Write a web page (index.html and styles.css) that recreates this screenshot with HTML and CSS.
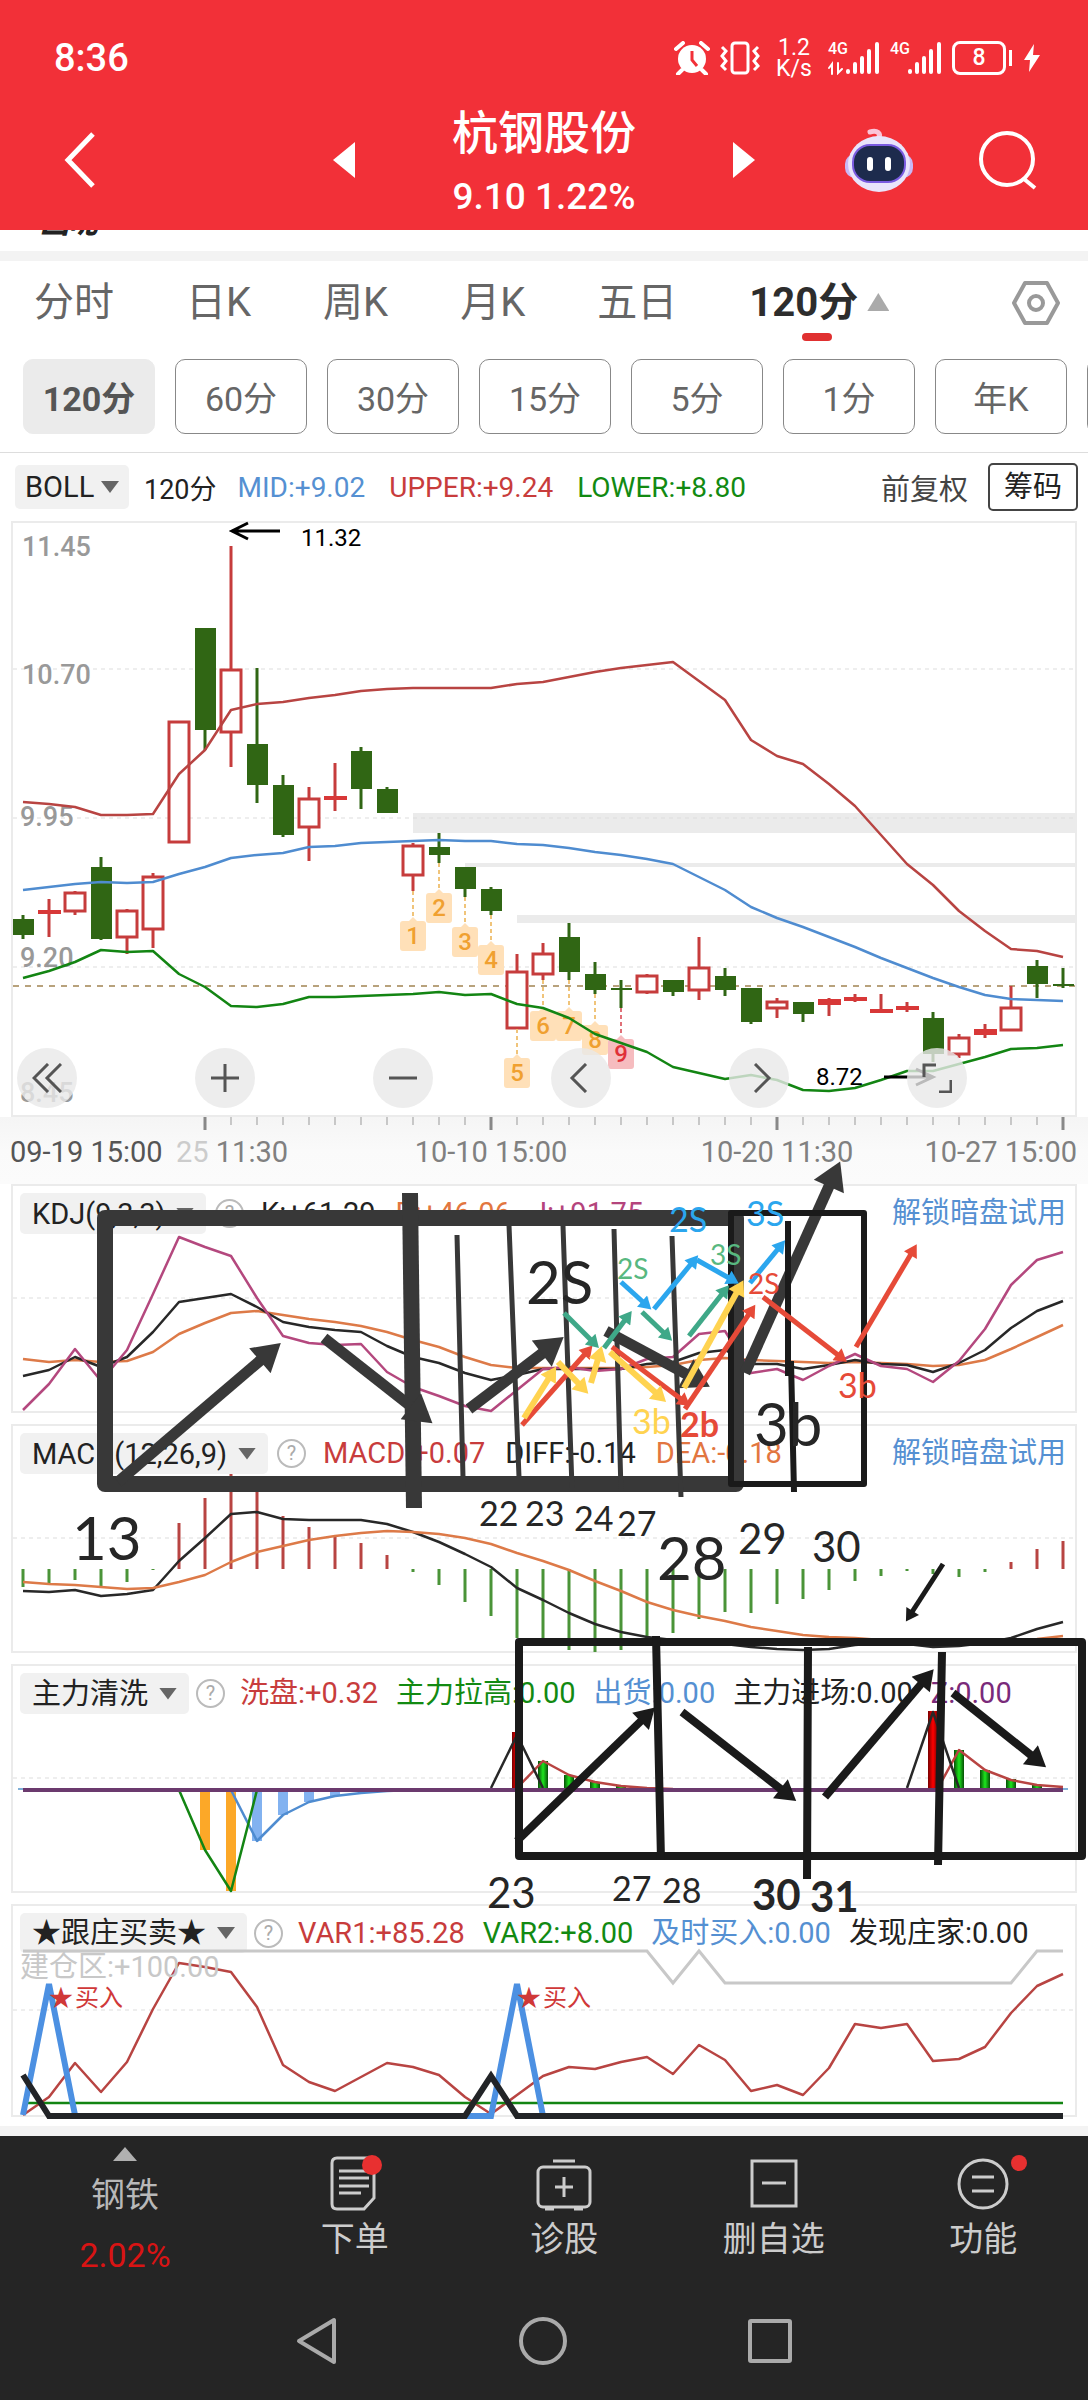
FILE: index.html
```
<!DOCTYPE html>
<html lang="zh-CN">
<head>
    <meta charset="UTF-8">
    <meta name="viewport" content="width=device-width, initial-scale=1.0">
    <title>杭钢股份</title>
    <link rel="stylesheet" href="styles.css">
</head>
<body>
    <header class="top">
        <div class="status">
            <span class="clock">8:36</span>
            <div class="status-icons">
                <svg width="36" height="34" viewBox="0 0 36 34">
                    <circle cx="18" cy="18" r="14" fill="#fff"/>
                    <path d="M18 10v9l5 6" fill="none" stroke="#f23038" stroke-width="3"/>
                    <path d="M2 8l7-6M34 8l-7-6M8 29l-4 4M28 29l4 4" stroke="#fff" stroke-width="4" stroke-linecap="round"/>
                </svg>
                <svg width="40" height="34" viewBox="0 0 40 34" fill="none" stroke="#fff" stroke-width="3">
                    <rect x="12" y="2" width="16" height="30" rx="3"/>
                    <path d="M2 6l4 4-4 5 4 5-4 5 4 4M38 6l-4 4 4 5-4 5 4 5-4 4"/>
                </svg>
                <span class="speed">1.2<br>K/s</span>
                <span class="signal">
                    <span class="net">4G</span>
                    <svg width="52" height="34" viewBox="0 0 52 34" fill="none" stroke="#fff" stroke-width="4" stroke-linecap="round">
                        <path d="M20 30v1M27 23v8M34 17v14M41 10v21M49 3v28"/>
                        <path d="M4 33V23l-3 4M10 22v10l4-4" stroke-width="2"/>
                    </svg>
                </span>
                <span class="signal">
                    <span class="net">4G</span>
                    <svg width="52" height="34" viewBox="0 0 52 34" fill="none" stroke="#fff" stroke-width="4" stroke-linecap="round">
                        <path d="M20 30v1M27 23v8M34 17v14M41 10v21M49 3v28"/>
                    </svg>
                </span>
                <span class="battery">8</span>
                <svg width="16" height="28" viewBox="0 0 16 28"><path d="M10 0L0 16h6l-1 12L16 11H9z" fill="#fff"/></svg>
            </div>
        </div>
        <div class="titlebar">
            <button class="icon-btn back" aria-label="返回">
                <svg width="32" height="56" viewBox="0 0 32 56"><path d="M29 2L4 28l25 26" fill="none" stroke="#fff" stroke-width="5"/></svg>
            </button>
            <div class="stock">
                <button class="icon-btn" aria-label="上一只"><svg width="22" height="36" viewBox="0 0 22 36"><path d="M22 0v36L0 18z" fill="#fff"/></svg></button>
                <div class="stock-name">
                    <h1>杭钢股份</h1>
                    <p>9.10 1.22%</p>
                </div>
                <button class="icon-btn" aria-label="下一只"><svg width="22" height="36" viewBox="0 0 22 36"><path d="M0 0v36l22-18z" fill="#fff"/></svg></button>
            </div>
            <div class="tools">
                <button class="icon-btn" aria-label="助手">
                    <svg width="70" height="66" viewBox="0 0 70 66">
                        <path d="M34 12c4-6-1-9-8-7" fill="none" stroke="#fbc4d8" stroke-width="5" stroke-linecap="round"/>
                        <rect x="1" y="27" width="68" height="24" rx="10" fill="#c9b8f5"/>
                        <ellipse cx="35" cy="37" rx="31" ry="28" fill="#e9e4fb"/>
                        <rect x="8" y="17" width="54" height="39" rx="18" fill="#7a5be0"/>
                        <rect x="10" y="19" width="50" height="35" rx="16" fill="#1d2b4d"/>
                        <path d="M26 33v8M44 33v8" stroke="#fff" stroke-width="6" stroke-linecap="round"/>
                    </svg>
                </button>
                <button class="icon-btn" aria-label="搜索">
                    <svg width="60" height="60" viewBox="0 0 60 60" fill="none" stroke="#fff" stroke-width="4"><circle cx="29" cy="29" r="26"/><path d="M46 49l11 9"/></svg>
                </button>
            </div>
        </div>
    </header>

    <div class="peek"><span>画呢</span></div>

    <nav class="tabs">
        <button>分时</button>
        <button>日K</button>
        <button>周K</button>
        <button>月K</button>
        <button>五日</button>
        <button class="active">120分</button>
        <button class="setting" aria-label="设置">
            <svg width="48" height="46" viewBox="0 0 48 46" fill="none" stroke="#999" stroke-width="4" stroke-linejoin="round"><path d="M13 3h22l11 20-11 20H13L2 23z"/><circle cx="24" cy="23" r="7"/></svg>
        </button>
    </nav>

    <div class="periods">
        <button class="active">120分</button>
        <button>60分</button>
        <button>30分</button>
        <button>15分</button>
        <button>5分</button>
        <button>1分</button>
        <button>年K</button>
        <button aria-label="季K"></button>
    </div>

    <div class="boll">
        <label class="chip"><select aria-label="主图指标"><option>BOLL</option></select></label>
        <span class="black cycle">120分</span>
        <span class="blue">MID:+9.02</span>
        <span class="red">UPPER:+9.24</span>
        <span class="green">LOWER:+8.80</span>
        <button class="adjust">前复权</button>
        <button class="chips-btn">筹码</button>
    </div>

    <!-- K线主图 -->
    <section class="kline">
        <svg class="plot" viewBox="13 523 1062 592">
            <g class="band">
                <rect x="413" y="813" width="662" height="20"/>
                <rect x="465" y="863" width="610" height="4"/>
                <rect x="517" y="915" width="558" height="8"/>
            </g>
            <path class="grid" d="M13 669H1075M13 818H1075M13 967H1075"/>
            <path class="price" d="M13 986H1075"/>
            <g class="axis">
                <text x="22" y="556">11.45</text>
                <text x="22" y="684">10.70</text>
                <text x="20" y="826">9.95</text>
                <text x="20" y="967">9.20</text>
                <text x="20" y="1102">8.45</text>
            </g>

            <!-- 阳线 -->
            <path class="up-wick" d="M49 899V937M75 891V893M75 911V915M127 909V911M127 937V954M153 873V877M153 929V948M231 546V670M231 732V767M309 787V799M309 827V861M335 763V811M413 843V846M413 875V891M517 954V972M543 943V954M543 974V980M647 974V976M647 992V994M699 937V968M699 990V1000M777 998V1002M777 1008V1018M829 998V1016M855 994V1002M881 994V1013M907 1002V1012M959 1034V1038M959 1054V1058M985 1024V1038M1011 986V1008"/>
            <g class="up">
                <rect x="65" y="893" width="20" height="18"/>
                <rect x="117" y="911" width="20" height="26"/>
                <rect x="143" y="877" width="20" height="52"/>
                <rect x="169" y="722" width="20" height="120"/>
                <rect x="221" y="670" width="20" height="62"/>
                <rect x="299" y="799" width="20" height="28"/>
                <rect x="403" y="846" width="20" height="29"/>
                <rect x="507" y="972" width="20" height="56"/>
                <rect x="533" y="954" width="20" height="20"/>
                <rect x="637" y="976" width="20" height="16"/>
                <rect x="689" y="968" width="20" height="22"/>
                <rect x="767" y="1002" width="20" height="6"/>
                <rect x="949" y="1038" width="20" height="16"/>
                <rect x="1001" y="1008" width="20" height="22"/>
            </g>
            <path class="up-flat" d="M38 910h23v4H38zM324 796h23v4H324zM818 999h23v6H818zM844 997h23v4H844zM870 1009h23v4H870zM896 1006h23v4H896zM974 1029h23v6H974z"/>

            <!-- 阴线 -->
            <path class="down-wick" d="M23 915V939M101 857V940M205 628V750M257 668V803M283 775V837M361 747V809M387 787V813M439 833V863M465 867V897M491 887V915M569 923V980M595 962V994M621 980V1008M673 980V996M725 968V996M751 988V1024M803 1002V1022M933 1012V1062M1037 960V998M1063 968V988"/>
            <path class="down" d="M13 919h21v16H13zM91 867h21v72H91zM195 628h21v102H195zM247 744h21v41H247zM273 785h21v50H273zM351 751h21v38H351zM377 789h21v24H377zM429 847h21v8H429zM455 867h21v22H455zM481 889h21v22H481zM559 937h21v35H559zM585 974h21v16H585zM611 988h21v2H611zM663 980h21v12H663zM715 976h21v14H715zM741 988h21v34H741zM793 1002h21v12H793zM923 1018h21v36H923zM1027 966h21v18H1027zM1053 984h21v2H1053z"/>

            <!-- 九转序列 -->
            <path class="nine-line" d="M413 891V920M439 863V892M465 897V926M491 915V944M517 1029V1057M543 980V1011M569 980V1011M595 994V1024"/>
            <path class="nine-line last" d="M621 1008V1037"/>
            <g class="nine">
                <path d="M403 921h6l4-4 4 4h6q3 0 3 3v24q0 3-3 3h-20q-3 0-3-3v-24q0-3 3-3z"/>
                <path d="M429 893h6l4-4 4 4h6q3 0 3 3v24q0 3-3 3h-20q-3 0-3-3v-24q0-3 3-3z"/>
                <path d="M455 927h6l4-4 4 4h6q3 0 3 3v24q0 3-3 3h-20q-3 0-3-3v-24q0-3 3-3z"/>
                <path d="M481 945h6l4-4 4 4h6q3 0 3 3v24q0 3-3 3h-20q-3 0-3-3v-24q0-3 3-3z"/>
                <path d="M507 1058h6l4-4 4 4h6q3 0 3 3v24q0 3-3 3h-20q-3 0-3-3v-24q0-3 3-3z"/>
                <path d="M533 1011h6l4-4 4 4h6q3 0 3 3v24q0 3-3 3h-20q-3 0-3-3v-24q0-3 3-3z"/>
                <path d="M559 1011h6l4-4 4 4h6q3 0 3 3v24q0 3-3 3h-20q-3 0-3-3v-24q0-3 3-3z"/>
                <path d="M585 1025h6l4-4 4 4h6q3 0 3 3v24q0 3-3 3h-20q-3 0-3-3v-24q0-3 3-3z"/>
                <path class="last" d="M611 1039h6l4-4 4 4h6q3 0 3 3v24q0 3-3 3h-20q-3 0-3-3v-24q0-3 3-3z"/>
                <text x="413" y="944">1</text>
                <text x="439" y="916">2</text>
                <text x="465" y="950">3</text>
                <text x="491" y="968">4</text>
                <text x="517" y="1081">5</text>
                <text x="543" y="1034">6</text>
                <text x="569" y="1034">7</text>
                <text x="595" y="1048">8</text>
                <text class="last" x="621" y="1062">9</text>
            </g>

            <polyline class="line c-red" points="23,802 49,804 75,807 101,815 127,815 153,814 179,774 205,750 231,710 257,704 283,702 309,698 335,695 361,691 387,689 413,688 439,688 465,688 491,688 517,684 543,682 569,677 595,672 621,668 647,665 673,662 699,681 725,700 751,740 777,756 803,764 829,784 855,806 881,835 907,864 933,885 959,911 985,931 1011,949 1037,951 1063,957"/>
            <polyline class="line c-blue" points="23,890 49,887 75,884 101,882 127,883 153,882 179,874 205,867 231,858 257,855 283,853 309,847 335,846 361,843 387,842 413,841 439,840 465,841 491,841 517,844 543,845 569,848 595,852 621,855 647,859 673,864 699,877 725,890 751,907 777,918 803,927 829,937 855,947 881,958 907,968 933,978 959,987 985,995 1011,999 1037,1000 1063,1001"/>
            <polyline class="line c-green" points="23,978 49,971 75,962 101,950 127,952 153,951 179,974 205,987 231,1006 257,1007 283,1004 309,997 335,997 361,996 387,995 413,994 439,992 465,995 491,994 517,1004 543,1008 569,1018 595,1034 621,1043 647,1052 673,1067 699,1073 725,1079 751,1075 777,1080 803,1090 829,1091 855,1088 881,1080 907,1071 933,1071 959,1064 985,1057 1011,1049 1037,1048 1063,1045"/>

            <g class="extreme">
                <path d="M280 531H232M248 523L232 531L248 539M884 1077H933M916 1069L933 1077L916 1085"/>
                <text x="301" y="546">11.32</text>
                <text x="816" y="1085">8.72</text>
            </g>
        </svg>
        <div class="zoom-bar">
            <button aria-label="最左"><svg width="30" height="30" viewBox="0 0 30 30"><path d="M16 1L2 15l14 14M29 1L15 15l14 14"/></svg></button>
            <button aria-label="放大"><svg width="30" height="30" viewBox="0 0 30 30"><path d="M1 15h28M15 1v28"/></svg></button>
            <button aria-label="缩小"><svg width="30" height="30" viewBox="0 0 30 30"><path d="M1 15h28"/></svg></button>
            <button aria-label="左移"><svg width="30" height="30" viewBox="0 0 30 30"><path d="M20 1L6 15l14 14"/></svg></button>
            <button aria-label="右移"><svg width="30" height="30" viewBox="0 0 30 30"><path d="M11 1l14 14-14 14"/></svg></button>
            <button aria-label="全屏"><svg width="30" height="30" viewBox="0 0 30 30"><path d="M14 2H2v12M17 29h12V17"/></svg></button>
        </div>
    </section>
    <svg class="time-axis" viewBox="0 1117 1088 67">
        <path class="tick" d="M231 1117v8M257 1117v8M283 1117v8M309 1117v8M335 1117v8M361 1117v8M387 1117v8M413 1117v8M439 1117v8M465 1117v8M517 1117v8M543 1117v8M569 1117v8M595 1117v8M621 1117v8M647 1117v8M673 1117v8M699 1117v8M725 1117v8M751 1117v8M803 1117v8M829 1117v8M855 1117v8M881 1117v8M907 1117v8M933 1117v8M959 1117v8M985 1117v8M1011 1117v8M1037 1117v8"/>
        <path class="tick major" d="M205 1117v13M491 1117v13M777 1117v13M1063 1117v13"/>
        <text class="first" x="10" y="1162">09-19 15:00</text>
        <text x="176" y="1162"><tspan class="faded">25</tspan> 11:30</text>
        <text x="491" y="1162" text-anchor="middle">10-10 15:00</text>
        <text x="777" y="1162" text-anchor="middle">10-20 11:30</text>
        <text x="1077" y="1162" text-anchor="end">10-27 15:00</text>
    </svg>

    <div class="studies">
        <section class="panel">
            <svg class="plot" viewBox="13 1186 1062 225">
                <path class="grid" d="M13 1298H1075"/>
                <polyline class="line c-orange" points="23,1359 49,1362 75,1360 101,1362 127,1361 153,1352 179,1334 205,1323 231,1313 257,1311 283,1315 309,1319 335,1322 361,1326 387,1332 413,1340 439,1347 465,1357 491,1365 517,1368 543,1368 569,1368 595,1368 621,1368 647,1367 673,1365 699,1360 725,1358 751,1360 777,1361 803,1362 829,1363 855,1362 881,1363 907,1364 933,1366 959,1365 985,1360 1011,1349 1037,1337 1063,1325"/>
                <polyline class="line c-black" points="23,1376 49,1370 75,1357 101,1367 127,1357 153,1332 179,1302 205,1298 231,1294 257,1307 283,1322 309,1327 335,1330 361,1332 387,1346 413,1357 439,1363 465,1373 491,1380 517,1375 543,1369 569,1369 595,1369 621,1369 647,1364 673,1362 699,1353 725,1350 751,1364 777,1364 803,1369 829,1365 855,1360 881,1364 907,1365 933,1372 959,1363 985,1350 1011,1328 1037,1311 1063,1301"/>
                <polyline class="line c-pink" points="23,1410 49,1384 75,1349 101,1381 127,1350 153,1294 179,1237 205,1247 231,1256 257,1298 283,1336 309,1343 335,1345 361,1344 387,1372 413,1387 439,1396 465,1406 491,1411 517,1390 543,1369 569,1367 595,1371 621,1369 647,1359 673,1357 699,1334 725,1331 751,1373 777,1369 803,1380 829,1366 855,1354 881,1366 907,1369 933,1382 959,1361 985,1329 1011,1285 1037,1260 1063,1252"/>
            </svg>
            <div class="head">
                <label class="chip"><select aria-label="副图指标一"><option>KDJ(9,3,3)</option></select></label>
                <button class="help" aria-label="KDJ说明">?</button>
                <span class="black">K:+61.29</span>
                <span class="orange">D:+46.06</span>
                <span class="pink">J:+91.75</span>
                <a class="unlock" href="#">解锁暗盘试用</a>
            </div>
        </section>

        <section class="panel">
            <svg class="plot" viewBox="13 1426 1062 225">
                <path class="grid" d="M13 1538H1075"/>
                <path class="bar c-red" d="M179 1569V1523M205 1569V1498M231 1569V1472M257 1569V1480M283 1569V1516M309 1569V1527M335 1569V1537M361 1569V1543M387 1569V1555M1011 1569V1562M1037 1569V1549M1063 1569V1541"/>
                <path class="bar c-leaf" d="M23 1569V1587M49 1569V1585M75 1569V1580M101 1569V1587M127 1569V1582M153 1569V1570M413 1569V1572M439 1569V1585M465 1569V1602M491 1569V1616M517 1569V1638M543 1569V1645M569 1569V1650M595 1569V1652M621 1569V1650M647 1569V1637M673 1569V1633M699 1569V1619M725 1569V1612M751 1569V1613M777 1569V1604M803 1569V1599M829 1569V1590M855 1569V1581M881 1569V1576M907 1569V1571M933 1569V1574M959 1569V1577M985 1569V1572"/>
                <polyline class="line c-black" points="23,1591 49,1592 75,1590 101,1596 127,1594 153,1590 179,1561 205,1538 231,1514 257,1512 283,1519 309,1520 335,1520 361,1520 387,1524 413,1532 439,1542 465,1554 491,1567 517,1588 543,1600 569,1613 595,1624 621,1632 647,1637 673,1640 699,1643 725,1644 751,1647 777,1649 803,1650 829,1649 855,1645 881,1643 907,1644 933,1647 959,1646 985,1643 1011,1638 1037,1629 1063,1622"/>
                <polyline class="line c-orange" points="23,1582 49,1584 75,1585 101,1587 127,1589 153,1588 179,1582 205,1575 231,1562 257,1552 283,1546 309,1540 335,1536 361,1533 387,1531 413,1532 439,1534 465,1538 491,1544 517,1553 543,1561 569,1570 595,1581 621,1591 647,1602 673,1610 699,1616 725,1621 751,1627 777,1631 803,1635 829,1637 855,1638 881,1640 907,1641 933,1642 959,1642 985,1642 1011,1641 1037,1639 1063,1636"/>
            </svg>
            <div class="head">
                <label class="chip"><select aria-label="副图指标二"><option>MACD(12,26,9)</option></select></label>
                <button class="help" aria-label="MACD说明">?</button>
                <span class="red">MACD:+0.07</span>
                <span class="black">DIFF:-0.14</span>
                <span class="orange">DEA:-0.18</span>
                <a class="unlock" href="#">解锁暗盘试用</a>
            </div>
        </section>

        <section class="panel">
            <svg class="plot" viewBox="13 1666 1062 225">
                <defs>
                    <linearGradient id="tubeGreen"><stop offset="0" stop-color="#064d06"/><stop offset=".5" stop-color="#1ee61e"/><stop offset="1" stop-color="#064d06"/></linearGradient>
                    <linearGradient id="tubeRed"><stop offset="0" stop-color="#700"/><stop offset=".5" stop-color="#f00"/><stop offset="1" stop-color="#700"/></linearGradient>
                </defs>
                <path class="grid" d="M13 1778H1075"/>
                <path d="M200 1790h10v60h-10zM226 1790h10v101h-10z" fill="#fca828"/>
                <path d="M252 1790h10v51h-10zM278 1790h10v25h-10zM304 1790h10v12h-10zM330 1790h10v6h-10z" fill="#82b2f0"/>
                <g fill="url(#tubeRed)">
                    <rect x="512" y="1732" width="10" height="56"/>
                    <rect x="928" y="1711" width="10" height="77"/>
                </g>
                <g fill="url(#tubeGreen)">
                    <rect x="538" y="1761" width="10" height="28"/>
                    <rect x="564" y="1775" width="10" height="14"/>
                    <rect x="590" y="1782" width="10" height="7"/>
                    <rect x="616" y="1786" width="10" height="3"/>
                    <rect x="954" y="1750" width="10" height="39"/>
                    <rect x="980" y="1770" width="10" height="19"/>
                    <rect x="1006" y="1779" width="10" height="10"/>
                    <rect x="1032" y="1785" width="10" height="4"/>
                </g>
                <polyline class="line c-blue" points="231,1790 257,1841 283,1815 309,1802 335,1796 361,1793 387,1791 413,1790"/>
                <polyline class="line c-green" points="179,1790 205,1850 231,1891 257,1790"/>
                <polyline class="line c-red" points="517,1788 543,1761 569,1775 595,1782 621,1786 647,1788 673,1789"/>
                <polyline class="line c-red" points="938,1788 959,1750 985,1770 1011,1780 1037,1785 1063,1787"/>
                <path class="line c-black" d="M491 1788L517 1735L543 1788M907 1788L933 1712L959 1788"/>
                <path d="M18 1789H1068" stroke="#7fb0d8" stroke-width="2"/>
                <path d="M23 1790H1063" stroke="#6b3a6e" stroke-width="4"/>
            </svg>
            <div class="head tight">
                <label class="chip"><select aria-label="副图指标三"><option>主力清洗</option></select></label>
                <button class="help" aria-label="主力清洗说明">?</button>
                <span class="red">洗盘:+0.32</span>
                <span class="green">主力拉高:0.00</span>
                <span class="blue">出货:0.00</span>
                <span class="black">主力进场:0.00</span>
                <span class="purple">Z:0.00</span>
            </div>
        </section>

        <section class="panel">
            <svg class="plot" viewBox="13 1906 1062 209">
                <path class="grid" d="M13 2010H1075"/>
                <polyline class="line c-red" points="23,2115 49,2097 75,2063 101,2092 127,2062 153,2009 179,1963 205,1967 231,1972 257,2007 283,2065 309,2082 335,2091 361,2077 387,2063 413,2067 439,2075 465,2097 491,2114 517,2095 543,2076 569,2067 595,2069 621,2062 647,2057 673,2074 699,2045 725,2060 751,2091 777,2085 803,2095 829,2068 855,2024 881,2028 907,2024 933,2061 959,2059 985,2047 1011,2013 1037,1986 1063,1974"/>
                <path class="line c-green" d="M23 2103H1063"/>
                <path class="thick c-sky" d="M23 2115L49 1984L75 2115M465 2116H491L517 1984L543 2116"/>
                <path class="thick c-ink" d="M23 2075L49 2116H465L491 2076L517 2116H1063"/>
                <g class="mark">
                    <text x="49" y="2006">★</text>
                    <text x="75" y="2006">买入</text>
                    <text x="517" y="2006">★</text>
                    <text x="543" y="2006">买入</text>
                </g>
            </svg>
            <div class="head two-line">
                <label class="chip"><select aria-label="副图指标四"><option>★跟庄买卖★</option></select></label>
                <button class="help" aria-label="跟庄买卖说明">?</button>
                <span class="red">VAR1:+85.28</span>
                <span class="green">VAR2:+8.00</span>
                <span class="blue">及时买入:0.00</span>
                <span class="black">发现庄家:0.00</span>
                <span class="silver">建仓区:+100.00</span>
            </div>
            <svg class="plot" viewBox="13 1906 1062 209">
                <polyline points="23,1951 647,1951 673,1983 699,1951 725,1983 1011,1983 1037,1951 1063,1951" fill="none" stroke="#c8c8c8" stroke-width="3"/>
            </svg>
        </section>

        <!-- 手绘批注 -->
        <svg class="notes" viewBox="0 1184 1088 933">
            <defs>
                <marker id="hDark" viewBox="0 0 10 12" refX="1" refY="6" markerWidth="3" markerHeight="3" orient="auto"><path d="M0 0L10 6L0 12z" fill="#383838"/></marker>
                <marker id="hBlack" viewBox="0 0 10 12" refX="1" refY="6" markerWidth="3" markerHeight="3" orient="auto"><path d="M0 0L10 6L0 12z" fill="#1a1a1a"/></marker>
                <marker id="hGreen" viewBox="0 0 10 12" refX="1" refY="6" markerWidth="3" markerHeight="3" orient="auto"><path d="M0 0L10 6L0 12z" fill="#3fa888"/></marker>
                <marker id="hBlue" viewBox="0 0 10 12" refX="1" refY="6" markerWidth="3" markerHeight="3" orient="auto"><path d="M0 0L10 6L0 12z" fill="#2ba6ee"/></marker>
                <marker id="hYellow" viewBox="0 0 10 12" refX="1" refY="6" markerWidth="3" markerHeight="3" orient="auto"><path d="M0 0L10 6L0 12z" fill="#ffd350"/></marker>
                <marker id="hRed" viewBox="0 0 10 12" refX="1" refY="6" markerWidth="3" markerHeight="3" orient="auto"><path d="M0 0L10 6L0 12z" fill="#e64a38"/></marker>
            </defs>
            <g stroke="#383838" stroke-linejoin="round">
                <rect x="105" y="1218" width="631" height="266" stroke-width="16"/>
                <path d="M410 1193L414 1508" stroke-width="16"/>
                <path d="M457 1235L463 1477M509 1225L519 1477M563 1226L572 1488M614 1229L621 1492M672 1236L681 1497" stroke-width="5"/>
                <g stroke-width="11">
                    <path d="M118 1482L262 1359" marker-end="url(#hDark)"/>
                    <path d="M324 1338L413 1408" marker-end="url(#hDark)"/>
                    <path d="M469 1409L544 1352" marker-end="url(#hDark)"/>
                    <path d="M606 1331L688 1375" marker-end="url(#hDark)"/>
                    <path d="M745 1373L830 1184" marker-end="url(#hDark)"/>
                </g>
            </g>
            <g stroke="#1a1a1a" stroke-linejoin="round">
                <rect x="731" y="1213" width="133" height="271" stroke-width="6"/>
                <path d="M788 1221V1376M791 1361L794 1492" stroke-width="6"/>
                <rect x="519" y="1642" width="563" height="214" stroke-width="8"/>
                <path d="M656 1636L661 1860M808 1647L807 1879M942 1652L938 1865" stroke-width="8"/>
                <g stroke-width="8">
                    <path d="M517 1841L642 1720" marker-end="url(#hBlack)"/>
                    <path d="M682 1712L782 1790" marker-end="url(#hBlack)"/>
                    <path d="M825 1797L922 1683" marker-end="url(#hBlack)"/>
                    <path d="M953 1693L1032 1756" marker-end="url(#hBlack)"/>
                    <path d="M943 1564L912 1612" stroke-width="5" marker-end="url(#hBlack)"/>
                </g>
            </g>
            <g stroke="#e64a38" stroke-width="5">
                <path d="M522 1425L585 1354" marker-end="url(#hRed)"/>
                <path d="M612 1347L681 1399" marker-end="url(#hRed)"/>
                <path d="M685 1409L749 1314" marker-end="url(#hRed)"/>
                <path d="M763 1297L838 1355" marker-end="url(#hRed)"/>
                <path d="M856 1347L911 1254" marker-end="url(#hRed)"/>
            </g>
            <g stroke="#ffd350" stroke-width="6">
                <path d="M524 1418L549 1378" marker-end="url(#hYellow)"/>
                <path d="M558 1362L579 1384" marker-end="url(#hYellow)"/>
                <path d="M591 1383L598 1359" marker-end="url(#hYellow)"/>
                <path d="M610 1352L656 1393" marker-end="url(#hYellow)"/>
                <path d="M684 1388L737 1292" marker-end="url(#hYellow)"/>
            </g>
            <g stroke="#3fa888" stroke-width="5">
                <path d="M564 1313L591 1340" marker-end="url(#hGreen)"/>
                <path d="M604 1348L625 1320" marker-end="url(#hGreen)"/>
                <path d="M642 1312L664 1333" marker-end="url(#hGreen)"/>
                <path d="M689 1336L722 1294" marker-end="url(#hGreen)"/>
            </g>
            <g stroke="#2ba6ee" stroke-width="5">
                <path d="M621 1282L643 1302" marker-end="url(#hBlue)"/>
                <path d="M654 1309L691 1264" marker-end="url(#hBlue)"/>
                <path d="M697 1260L729 1278" marker-end="url(#hBlue)"/>
                <path d="M750 1283L778 1249" marker-end="url(#hBlue)"/>
            </g>
            <g class="hand">
                <text class="xl" x="72" y="1560">13</text>
                <text class="m" x="479" y="1526">22</text>
                <text class="m" x="525" y="1526">23</text>
                <text class="m" x="574" y="1531">24</text>
                <text class="m" x="617" y="1536">27</text>
                <text class="xl" x="657" y="1580">28</text>
                <text class="l" x="738" y="1554">29</text>
                <text class="l" x="812" y="1562">30</text>
                <text class="xl" x="526" y="1304">2S</text>
                <text class="xl" x="754" y="1446">3b</text>
                <text class="l" x="487" y="1908">23</text>
                <text class="m" x="612" y="1901">27</text>
                <text class="m" x="662" y="1903">28</text>
                <text class="l bold" x="752" y="1910">30</text>
                <text class="l bold" x="810" y="1912">31</text>
                <text class="m h-blue" x="669" y="1232">2S</text>
                <text class="m h-blue" x="746" y="1226">3S</text>
                <text class="s h-green" x="617" y="1279">2S</text>
                <text class="s h-green" x="710" y="1265">3S</text>
                <text class="s h-red" x="748" y="1294">2S</text>
                <text class="m h-yellow" x="632" y="1434">3b</text>
                <text class="m h-red bold" x="680" y="1437">2b</text>
                <text class="m h-red" x="838" y="1398">3b</text>
            </g>
        </svg>
    </div>

    <footer class="bottom">
        <nav class="actions">
            <a class="sector" href="#">
                <i class="caret"></i>
                <span>钢铁</span>
                <b>2.02%</b>
            </a>
            <a href="#">
                <svg width="54" height="58" viewBox="0 0 54 58" fill="none" stroke="#ccc" stroke-width="3">
                    <path d="M9 3h32q5 0 5 5v35L36 54H9q-5 0-5-5V8q0-5 5-5z"/><path d="M11 16h28M11 23h30M11 31h30M11 38h22"/>
                    <circle cx="44" cy="10" r="10" fill="#e83030" stroke="none"/>
                </svg>
                <span>下单</span>
            </a>
            <a href="#">
                <svg width="56" height="58" viewBox="0 0 56 58" fill="none" stroke="#ccc" stroke-width="3">
                    <rect x="2" y="12" width="52" height="40" rx="5"/><path d="M17 6h22M28 22v20M19 32h18M9 54h9M38 54h9"/>
                </svg>
                <span>诊股</span>
            </a>
            <a href="#">
                <svg width="50" height="58" viewBox="0 0 50 58" fill="none" stroke="#ccc" stroke-width="3">
                    <path d="M3 6h44v45H3zM13 28h24"/>
                </svg>
                <span>删自选</span>
            </a>
            <a href="#">
                <svg width="90" height="58" viewBox="0 0 90 58" fill="none" stroke="#ccc" stroke-width="3">
                    <circle cx="45" cy="29" r="24"/><path d="M34 22h22M34 36h22"/>
                    <circle cx="81" cy="8" r="8" fill="#e83030" stroke="none"/>
                </svg>
                <span>功能</span>
            </a>
        </nav>
        <div class="sysnav">
            <button class="icon-btn" aria-label="后退"><svg width="44" height="50" viewBox="0 0 44 50"><path d="M39 4v42L4 25z"/></svg></button>
            <button class="icon-btn" aria-label="主屏幕"><svg width="50" height="50" viewBox="0 0 50 50"><circle cx="25" cy="25" r="22"/></svg></button>
            <button class="icon-btn" aria-label="最近任务"><svg width="46" height="50" viewBox="0 0 46 50"><rect x="3" y="5" width="40" height="40" rx="1"/></svg></button>
        </div>
    </footer>
</body>
</html>
```
FILE: styles.css
```
* {
    box-sizing: border-box;
}
body {
    margin: 0;
    background: #fff;
    color: #222;
    font-family: Roboto, "Noto Sans CJK SC", sans-serif;
}
button, select {
    font-family: inherit;
    border: none;
    background: none;
    padding: 0;
    margin: 0;
    cursor: pointer;
}
a {
    text-decoration: none;
}
h1, p {
    margin: 0;
}
svg {
    display: block;
}
.icon-btn {
    display: block;
}

/* 顶部 */
.top {
    background: #f23038;
    color: #fff;
}
.status {
    display: flex;
    justify-content: space-between;
    align-items: center;
    height: 96px;
    padding: 20px 48px 0 54px;
}
.clock {
    font-size: 38px;
    font-weight: 500;
}
.status-icons {
    display: flex;
    align-items: center;
    gap: 10px;
}
.speed {
    width: 42px;
    margin: 0 3px;
    font-size: 23px;
    line-height: 21px;
    text-align: center;
}
.signal {
    display: grid;
}
.signal > * {
    grid-area: 1 / 1;
}
.net {
    font-size: 16px;
    line-height: 16px;
    font-weight: 500;
}
.battery {
    position: relative;
    width: 54px;
    height: 34px;
    margin-right: 8px;
    border: 3px solid #fff;
    border-radius: 8px;
    font-size: 23px;
    line-height: 28px;
    font-weight: 500;
    text-align: center;
}
.battery::after {
    content: "";
    position: absolute;
    right: -9px;
    top: 6px;
    width: 3px;
    height: 16px;
    background: #fff;
}
.titlebar {
    display: grid;
    grid-template-columns: 1fr auto 1fr;
    align-items: center;
    height: 134px;
    padding: 0 50px 6px 64px;
}
.stock {
    display: flex;
    align-items: center;
    justify-content: space-between;
    width: 422px;
    margin-right: 14px;
}
.stock-name {
    margin: 5px 0 -5px;
    text-align: center;
}
.stock-name h1 {
    font-size: 46px;
    line-height: 64px;
    font-weight: 500;
}
.stock-name p {
    font-size: 37px;
    line-height: 64px;
    font-weight: 500;
}
.tools {
    display: flex;
    align-items: center;
    justify-content: flex-end;
    gap: 64px;
}

.peek {
    display: flex;
    align-items: flex-end;
    height: 31px;
    padding: 0 40px 10px;
    border-bottom: 10px solid #f3f3f3;
}
.peek span {
    height: 11px;
    overflow: hidden;
    display: flex;
    align-items: flex-end;
    font-size: 29px;
    line-height: 36px;
    font-weight: 900;
    font-style: italic;
}

/* 周期 */
.tabs {
    display: flex;
    align-items: center;
    gap: 72px;
    height: 88px;
    padding: 0 28px 4px 34px;
}
.tabs button {
    font-size: 40px;
    line-height: 60px;
    color: #666;
}
.tabs .active {
    position: relative;
    color: #2d2d2d;
    font-weight: 700;
}
.tabs .active::before {
    content: "";
    position: absolute;
    left: 53px;
    bottom: -8px;
    width: 30px;
    height: 8px;
    border-radius: 4px;
    background: #e03030;
}
.tabs .active::after {
    content: "";
    position: absolute;
    left: 118px;
    top: 20px;
    width: 22px;
    height: 18px;
    background: #aaa;
    clip-path: polygon(50% 0, 100% 100%, 0 100%);
}
.tabs .setting {
    margin-left: auto;
}
.periods {
    display: flex;
    gap: 20px;
    padding: 10px 0 18px 23px;
    overflow: hidden;
    border-bottom: 1px solid #ddd;
}
.periods button {
    flex: none;
    width: 132px;
    height: 75px;
    border: 1px solid #888;
    border-radius: 10px;
    font-size: 34px;
    color: #666;
}
.periods .active {
    border-color: #ebebeb;
    background: #ebebeb;
    color: #555;
    font-weight: 700;
}

/* 指标名 */
.chip {
    display: flex;
    align-items: center;
    flex: none;
    gap: 10px;
    padding: 0 12px;
    border-radius: 5px;
    background: #f1f1f1;
}
.chip::after {
    content: "";
    width: 18px;
    height: 12px;
    background: #666;
    clip-path: polygon(0 0, 100% 0, 50% 100%);
}
.chip select {
    appearance: none;
    font-size: 29px;
    color: #222;
}
.boll {
    display: flex;
    align-items: center;
    gap: 24px;
    height: 68px;
    padding: 0 10px 0 15px;
    font-size: 28px;
    white-space: nowrap;
}
.boll .chip {
    height: 44px;
    gap: 6px;
    padding: 0 10px;
    margin-right: -9px;
}
.boll .cycle {
    font-size: 27px;
    margin-right: -3px;
}
.boll .adjust {
    margin-left: auto;
    font-size: 29px;
    color: #444;
}
.chips-btn {
    width: 90px;
    height: 48px;
    margin-left: -4px;
    border: 2px solid #444;
    border-radius: 5px;
    font-size: 29px;
    line-height: 40px;
    color: #222;
}

.black { color: #222; }
.blue { color: #5590d2; }
.red { color: #c83c3c; }
.green { color: #128a12; }
.orange { color: #e27640; }
.pink { color: #b4447c; }
.purple { color: #7a2a7a; }
.silver { color: #c8c8c8; }

/* 图形 */
.kline {
    position: relative;
    margin: 0 11px;
    border: 2px solid #ebebeb;
}
.plot {
    width: 100%;
    height: auto;
    overflow: visible;
}
.band {
    fill: #ebebeb;
}
.grid {
    stroke: #ddd;
    stroke-width: 1;
    stroke-dasharray: 4 4;
}
.price {
    stroke: #b8a27c;
    stroke-width: 2;
    stroke-dasharray: 6 6;
}
.axis {
    font-size: 27px;
    font-weight: 500;
    fill: #999;
}
.up {
    fill: #fff;
    stroke: #c63c3c;
    stroke-width: 3;
}
.up-wick {
    stroke: #c63c3c;
    stroke-width: 3;
}
.up-flat {
    fill: #d83838;
}
.down {
    fill: #306614;
}
.down-wick {
    stroke: #306614;
    stroke-width: 3;
}
.nine-line {
    stroke: #f0c47a;
    stroke-width: 2;
    stroke-dasharray: 4 3;
}
.nine-line.last {
    stroke: #e07078;
}
.nine path {
    fill: #ffe0b8;
}
.nine text {
    font-size: 24px;
    font-weight: 500;
    text-anchor: middle;
    fill: #f0a030;
}
.nine path.last {
    fill: #f6bcbf;
}
.nine text.last {
    fill: #e03038;
}
.line {
    fill: none;
    stroke-width: 2.5;
    stroke-linejoin: round;
}
.thick {
    fill: none;
    stroke-width: 6;
}
.bar {
    stroke-width: 3;
}
.c-red { stroke: #b84442; }
.c-blue { stroke: #4f8cd0; }
.c-green { stroke: #138513; }
.c-leaf { stroke: #4a9438; }
.c-orange { stroke: #dd7a48; }
.c-black { stroke: #282828; }
.c-pink { stroke: #b4487e; }
.c-sky { stroke: #4c90e2; }
.c-ink { stroke: #222427; }
.extreme path {
    fill: none;
    stroke: #000;
    stroke-width: 3;
}
.extreme text {
    font-size: 24px;
    fill: #000;
}
.mark {
    font-size: 24px;
    fill: #d03838;
}

.zoom-bar {
    position: absolute;
    left: 4px;
    bottom: 7px;
    width: 950px;
    display: flex;
    justify-content: space-between;
}
.zoom-bar button {
    display: flex;
    align-items: center;
    justify-content: center;
    width: 60px;
    height: 60px;
    border-radius: 50%;
    background: rgba(232, 232, 232, 0.8);
}
.zoom-bar svg {
    fill: none;
    stroke: #555;
    stroke-width: 3;
}
.time-axis {
    width: 100%;
    height: auto;
    background: linear-gradient(#f5f5f5, #fafafa 50%, #fbfbfb);
    font-size: 29px;
    fill: #808080;
}
.tick {
    stroke: #999;
    stroke-width: 1;
}
.tick.major {
    stroke: #888;
    stroke-width: 3;
}
.time-axis .first {
    fill: #555;
}
.faded {
    fill: #ccc;
}

/* 副图 */
.studies {
    position: relative;
    display: flex;
    flex-direction: column;
    gap: 11px;
    padding: 0 11px;
}
.panel {
    display: grid;
    border: 2px solid #ebebeb;
}
.panel > * {
    grid-area: 1 / 1;
    min-width: 0;
}
.head {
    display: flex;
    flex-wrap: wrap;
    align-content: flex-start;
    align-items: center;
    column-gap: 20px;
    padding: 7px 9px 0 7px;
    font-size: 29px;
    line-height: 41px;
    white-space: nowrap;
}
.head .chip {
    height: 41px;
    margin-right: -11px;
}
.help {
    width: 29px;
    height: 29px;
    margin-right: -3px;
    border: 2px solid #bbb;
    border-radius: 50%;
    font-size: 20px;
    line-height: 25px;
    color: #aaa;
}
.unlock {
    margin-left: auto;
    color: #5590d2;
}
.tight {
    column-gap: 18px;
}
.two-line {
    row-gap: 0;
    line-height: 40px;
    column-gap: 18px;
}
.two-line .chip {
    height: 40px;
}
.two-line .silver {
    flex-basis: 100%;
    line-height: 28px;
}
.notes {
    position: absolute;
    left: 0;
    top: 0;
    width: 100%;
    height: auto;
    overflow: visible;
    fill: none;
    pointer-events: none;
}
.hand {
    font-family: Lato, sans-serif;
    fill: #262626;
}
.hand .s { font-size: 28px; }
.hand .m { font-size: 34px; }
.hand .l { font-size: 42px; }
.hand .xl { font-size: 60px; }
.hand .bold { font-weight: 700; }
.h-blue { fill: #2ba6ee; }
.h-green { fill: #58b880; }
.h-red { fill: #e64a38; }
.h-yellow { fill: #ffd350; }

/* 底部 */
.bottom {
    margin-top: 9px;
    border-top: 10px solid #f3f3f3;
    background: #252525;
}
.actions {
    display: flex;
    height: 154px;
}
.actions a {
    flex: 1;
    display: flex;
    flex-direction: column;
    align-items: center;
    padding-top: 19px;
    font-size: 34px;
    line-height: 48px;
    color: #ccc;
}
.actions svg {
    margin-bottom: 2px;
}
.actions .sector {
    flex: none;
    width: 250px;
    padding-top: 11px;
    color: #b8b8b8;
}
.sector b {
    margin-top: 12px;
    font-weight: 400;
    color: #d81414;
}
.caret {
    width: 24px;
    height: 14px;
    margin-bottom: 10px;
    background: #b0b0b0;
    clip-path: polygon(50% 0, 100% 100%, 0 100%);
}
.sysnav {
    display: flex;
    justify-content: center;
    align-items: center;
    gap: 179px;
    height: 110px;
    padding-bottom: 8px;
}
.sysnav svg {
    fill: none;
    stroke: #aaa;
    stroke-width: 4;
    stroke-linejoin: round;
}
```
